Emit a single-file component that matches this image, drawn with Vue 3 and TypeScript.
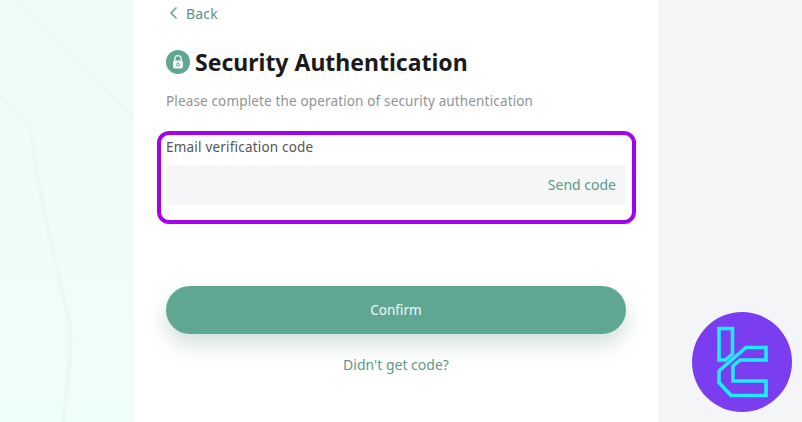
<script setup lang="ts">
const title = 'Security Authentication'
</script>

<template>
  <div class="page">
    <aside class="left">
      <svg class="lines" viewBox="0 0 133 422" preserveAspectRatio="none" aria-hidden="true">
        <path d="M18 0 L133 116" stroke="#e0f1ec" stroke-width="1" fill="none" />
        <path d="M0 97 L32 130" stroke="#e0f1ec" stroke-width="1" fill="none" />
        <path d="M31 133 C36 185 58 270 70 325 C72 360 66 395 63 422" stroke="#edf8f5" stroke-width="4" fill="none" />
      </svg>
    </aside>
    <main class="center">
      <a class="back">
        <svg width="9" height="14" viewBox="0 0 9 14"><path d="M7.5 1.5 L2 7 L7.5 12.5" fill="none" stroke="#5fa08f" stroke-width="1.5" /></svg>
        <span>Back</span>
      </a>
      <h1 class="title">
        <svg width="24" height="24" viewBox="0 0 24 24">
          <circle cx="12" cy="12" r="12" fill="#5fa792" />
          <path d="M8.8 11 V8.8 a3.2 3.2 0 0 1 6.4 0 V11" fill="none" stroke="#f2faf7" stroke-width="1.3" />
          <rect x="7" y="10.5" width="10" height="8" rx="2" fill="#f2faf7" />
          <circle cx="12" cy="14.5" r="1.5" fill="none" stroke="#5fa792" stroke-width="1" />
        </svg>
        <span>{{ title }}</span>
      </h1>
      <p class="sub">Please complete the operation of security authentication</p>
      <label class="label">Email verification code</label>
      <div class="field"><span class="send">Send code</span></div>
      <button class="confirm">Confirm</button>
      <a class="again">Didn't get code?</a>
      <div class="highlight"></div>
    </main>
    <aside class="right"></aside>
    <svg class="logo" viewBox="0 0 100 100" width="100" height="100" aria-label="logo">
      <circle cx="50" cy="50" r="50" fill="#7a3ef0" />
      <g fill="none" stroke="#1fecfb" stroke-width="3.6" stroke-linejoin="miter">
        <path d="M27 16.5 H40.5 V42 L33.5 48 H27 Z" />
        <path d="M54 35.5 H74 V48 H48 L41 54 V69 H74 V83.5 H39 L27 70.5 V59 Z" />
      </g>
    </svg>
  </div>
</template>

<style>
html, body { margin: 0; padding: 0; }
</style>

<style scoped>
.page {
  position: relative;
  display: flex;
  width: 802px;
  height: 422px;
  overflow: hidden;
  font-family: "Noto Sans", "Open Sans", sans-serif;
  background: #fff;
}
.left {
  flex: 0 0 133px;
  background: linear-gradient(180deg, #eefcf7 0%, #eefef9 100%);
}
.lines { display: block; width: 133px; height: 422px; }
.center {
  position: relative;
  flex: 0 0 525px;
  box-sizing: border-box;
  padding: 4px 32px 0 33px;
  display: flex;
  flex-direction: column;
  background: #fff;
}
.right { flex: 1; background: #f4f5f7; }
.back {
  display: flex;
  align-items: center;
  gap: 8px;
  margin-left: 3px;
  height: 18px;
  font-size: 14px;
  letter-spacing: 0.2px;
  color: #5e8f82;
}
.title {
  display: flex;
  align-items: center;
  gap: 5px;
  margin: 23px 0 0;
  height: 34px;
  font-size: 23px;
  line-height: 34px;
  font-weight: 700;
  color: #1a1a1a;
}
.sub {
  margin: 13px 0 0;
  font-size: 13.5px;
  letter-spacing: 0.15px;
  line-height: 18px;
  color: #8f9392;
}
.label {
  margin-top: 28px;
  font-size: 13.5px;
  letter-spacing: 0.2px;
  line-height: 18px;
  color: #555;
}
.field {
  display: flex;
  align-items: center;
  justify-content: flex-end;
  margin-top: 9px;
  height: 40px;
  padding: 0 10px 2px 0;
  box-sizing: border-box;
  border-radius: 3px;
  background: #f4f6f7;
}
.send { font-size: 14px; color: #5c9a88; }
.confirm {
  margin-top: 81px;
  height: 48px;
  border: none;
  border-radius: 24px;
  background: #5fa792;
  color: #eefbf6;
  font-family: inherit;
  font-size: 13.5px;
  box-shadow: 0 10px 20px rgba(70, 130, 115, 0.25);
}
.again {
  margin-top: 22px;
  text-align: center;
  font-size: 14px;
  line-height: 18px;
  color: #5c9a88;
}
.highlight {
  position: absolute;
  left: 24px;
  top: 131px;
  width: 479px;
  height: 93px;
  box-sizing: border-box;
  border: 4px solid #a400ee;
  border-radius: 12px;
  pointer-events: none;
}
.logo { position: absolute; left: 692px; top: 312px; }
</style>
